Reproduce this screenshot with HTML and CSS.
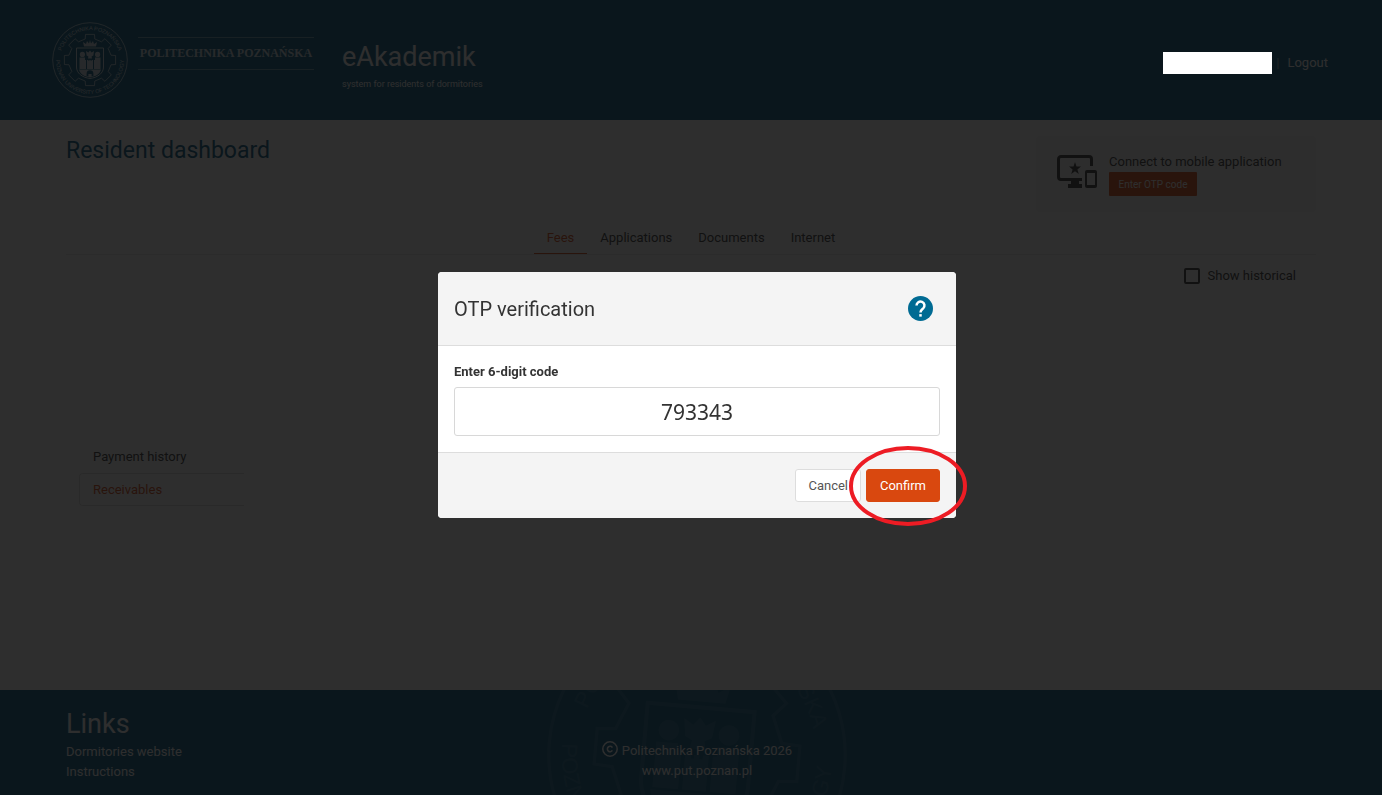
FILE: index.html
```
<!DOCTYPE html>
<html lang="en">
<head>
  <meta charset="UTF-8">
  <meta name="viewport" content="width=device-width, initial-scale=1.0">
  <title>eAkademik - OTP verification</title>
  <link rel="stylesheet" href="styles.css">
</head>
<body>
  <header class="header">
    <!-- the footer reuses this seal -->
    <svg class="header-seal" viewBox="-38 -38 76 76" aria-hidden="true">
      <defs>
        <path id="arcTop" d="M-29.6 5A30 30 0 1 1 29.6 5"/>
        <path id="arcBottom" d="M-32.5 -10A34 34 0 1 0 32.5 -10"/>
      </defs>
      <g id="seal">
        <circle r="37.3" fill="none" stroke="currentColor" stroke-width=".8"/>
        <path fill="none" stroke="currentColor" stroke-width=".8" d="M-4.8 -21L-4.5 -25.6H4.5L4.8 -21L11.5 -18.2L14.9 -21.3L21.3 -14.9L18.2 -11.5L21 -4.8L25.6 -4.5V4.5L21 4.8L18.2 11.5L21.3 14.9L14.9 21.3L11.5 18.2L4.8 21L4.5 25.6H-4.5L-4.8 21L-11.5 18.2L-14.9 21.3L-21.3 14.9L-18.2 11.5L-21 4.8L-25.6 4.5V-4.5L-21 -4.8L-18.2 -11.5L-21.3 -14.9L-14.9 -21.3L-11.5 -18.2Z"/>
        <path fill="none" stroke="currentColor" stroke-width="1" d="M-13.5 -12H13.5V7C13.5 13 8 17.5 0 18.5C-8 17.5 -13.5 13 -13.5 7Z"/>
        <path fill="currentColor" d="M-6 -13.5L-7 -18L-4 -16L-3 -19L-1 -16.5L0 -20L1 -16.5L3 -19L4 -16L7 -18L6 -13.5Z"/>
        <g fill="currentColor">
          <circle cx="-7.6" cy="-5.6" r="2.6"/>
          <circle cx="7.6" cy="-5.6" r="2.6"/>
          <path d="M-4 -9L-1.6 -7.5L0 -9.5L1.6 -7.5L4 -9L3.4 -4.5L1.6 -3.6L2 -1.5H-2L-1.6 -3.6L-3.4 -4.5Z"/>
          <path d="M-10.5 -2.5H-5V0H-4V9H-10.5ZM5 -2.5H10.5V9H4V0H5ZM-3 0H-1.5V1H-.7V0H.7V1H1.5V0H3V9H-3Z"/>
          <path fill-rule="evenodd" d="M-11 9.6H11C10 14 6 16.6 0 17.4C-6 16.6 -10 14 -11 9.6ZM-3.4 16V13.6A3.4 3.4 0 0 1 3.4 13.6V16L1.6 16.4V14H-1.6V16.4Z"/>
        </g>
        <text class="seal-text"><textPath href="#arcTop" startOffset="50%" text-anchor="middle">POLITECHNIKA POZNAŃSKA</textPath></text>
        <text class="seal-text"><textPath href="#arcBottom" startOffset="50%" text-anchor="middle">POZNAN UNIVERSITY OF TECHNOLOGY</textPath></text>
      </g>
    </svg>
    <div class="university">POLITECHNIKA POZNAŃSKA</div>
    <div class="brand">
      <div class="brand-name">eAkademik</div>
      <div class="brand-sub">system for residents of dormitories</div>
    </div>
    <div class="user">
      <span class="user-name"></span>
      <span class="user-sep">|</span>
      <a href="#">Logout</a>
    </div>
  </header>

  <main class="main">
    <div class="top">
      <h1>Resident dashboard</h1>
      <div class="mobile">
        <svg class="mobile-icon" viewBox="0 0 40 34" aria-hidden="true">
          <path fill="none" stroke="currentColor" stroke-width="3" d="M34.5 11V4A2.5 2.5 0 0 0 32 1.5H4A2.5 2.5 0 0 0 1.5 4V22A2.5 2.5 0 0 0 4 24.5H25"/>
          <path fill="currentColor" d="M14 25H22V29H25V33H11V29H14Z"/>
          <path fill="currentColor" d="M18 7L19.5 11.6H24L20.4 14.4L21.8 19L18 16.2L14.2 19L15.6 14.4L12 11.6H16.5Z"/>
          <path fill="currentColor" fill-rule="evenodd" d="M30 15H38A2 2 0 0 1 40 17V31A2 2 0 0 1 38 33H30A2 2 0 0 1 28 31V17A2 2 0 0 1 30 15ZM30 18V30H38V18Z"/>
        </svg>
        <div>
          <div class="mobile-title">Connect to mobile application</div>
          <button type="button" class="otp-btn">Enter OTP code</button>
        </div>
      </div>
    </div>

    <nav class="tabs">
      <a class="tab active" href="#">Fees</a>
      <a class="tab" href="#">Applications</a>
      <a class="tab" href="#">Documents</a>
      <a class="tab" href="#">Internet</a>
    </nav>

    <div class="filter">
      <input type="checkbox" id="historical">
      <label for="historical">Show historical</label>
    </div>

    <nav class="side">
      <a href="#">Payment history</a>
      <a class="current" href="#">Receivables</a>
    </nav>
  </main>

  <footer class="footer">
    <svg class="footer-seal" viewBox="-38 -38 76 76" aria-hidden="true"><use href="#seal"/></svg>
    <div class="links">
      <h2>Links</h2>
      <a href="#">Dormitories website</a>
      <a href="#">Instructions</a>
    </div>
    <div class="copy">
      <div class="copy-line">
        <svg class="copy-icon" viewBox="0 0 16 16" aria-hidden="true">
          <circle cx="8" cy="8" r="7.2" fill="none" stroke="currentColor" stroke-width="1.5"/>
          <path fill="none" stroke="currentColor" stroke-width="1.6" d="M10.4 6.6A2.7 2.7 0 1 0 10.4 9.4"/>
        </svg>
        <span>Politechnika Poznańska 2026</span>
      </div>
      <a href="#">www.put.poznan.pl</a>
    </div>
  </footer>

  <div class="backdrop">
    <form class="modal" role="dialog" aria-labelledby="otpTitle">
      <div class="modal-header">
        <h2 id="otpTitle">OTP verification</h2>
        <button type="button" class="help" aria-label="Help">
          <svg viewBox="0 0 24 24" aria-hidden="true">
            <circle cx="12" cy="12" r="12" fill="#006b93"/>
            <path fill="none" stroke="#fff" stroke-width="2.4" d="M8.2 9.2A3.8 3.8 0 1 1 14.6 11.9C13.2 13.1 12 13.6 12 15.8"/>
            <path fill="#fff" d="M10.8 17.4H13.2V19.8H10.8Z"/>
          </svg>
        </button>
      </div>
      <div class="modal-body">
        <label for="code">Enter 6-digit code</label>
        <input type="text" id="code" value="793343" maxlength="6" inputmode="numeric">
      </div>
      <div class="modal-footer">
        <button type="button" class="btn">Cancel</button>
        <div class="confirm-wrap">
          <button type="submit" class="btn btn-primary">Confirm</button>
          <svg class="marker" viewBox="0 0 120 82" aria-hidden="true">
            <ellipse cx="60" cy="41" rx="57" ry="38" fill="none" stroke="#ed1c24" stroke-width="4"/>
          </svg>
        </div>
      </div>
    </form>
  </div>
</body>
</html>
```
FILE: styles.css
```
* { box-sizing: border-box; }
html, body { height: 100%; }
body {
  margin: 0; display: flex; flex-direction: column; background: #fff; color: #333;
  font-family: Roboto, "Noto Sans", sans-serif; font-size: 13px; line-height: 20px;
}
a { color: inherit; text-decoration: none; }
h1, h2 { margin: 0; font-weight: 400; }
button { font-family: inherit; cursor: pointer; }
.seal-text { font-family: "Liberation Sans", sans-serif; font-size: 5.5px; fill: currentColor; }

/* header */
.header {
  display: flex; height: 120px; flex-shrink: 0; padding: 0 52px;
  background: #005680; color: #fff;
}
.header-seal { width: 76px; height: 76px; margin: 22px 10px 0 0; opacity: .8; }
.university {
  height: 33px; min-width: 176px; margin-top: 37px; border: solid rgba(255,255,255,.5); border-width: 1px 0;
  font-family: "Liberation Serif", serif; font-size: 12px; line-height: 31px; font-weight: bold;
  text-align: center; opacity: .8;
}
.brand { margin: 42px 0 0 28px; }
.brand-name { font-size: 27px; line-height: 30px; }
.brand-sub { font-size: 9px; line-height: 12px; margin-top: 6px; }
.user { display: flex; align-items: center; height: 24px; margin: 51px 2px 0 auto; gap: 4px; }
.user-name { position: relative; z-index: 20; width: 109px; height: 22px; background: #fff; }
.user-sep { opacity: .5; }
.user a { margin-left: 4px; }

/* dashboard */
.main { flex: 1 0 auto; padding: 16px 66px 0; }
.top { display: flex; justify-content: space-between; align-items: flex-start; }
.top h1 { font-size: 23px; line-height: 30px; color: #005680; }
.mobile {
  display: flex; gap: 12px; width: 280px; height: 76px; padding: 16px 21px;
  background: #f8f8f8; border-radius: 4px;
}
.mobile-icon { width: 40px; height: 34px; margin-top: 3px; flex-shrink: 0; }
.mobile-title { line-height: 20px; white-space: nowrap; }
.otp-btn {
  display: block; width: 88px; height: 24px; padding: 0; border: 0; border-radius: 1px;
  background: #d9480f; color: #fff; font-size: 10px;
}
.tabs { display: flex; justify-content: center; margin-top: 10px; border-bottom: 1px solid #e5e5e5; }
.tab { padding: 6px 13px 5px; border-bottom: 1px solid transparent; }
.tab.active { color: #d9480f; border-color: #d9480f; }
.filter { display: flex; justify-content: flex-end; align-items: center; gap: 8px; padding: 11px 20px 0 0; }
.filter input {
  appearance: none; width: 16px; height: 16px; margin: 0; border: 2px solid #333; border-radius: 2px;
}
.side { display: flex; flex-direction: column; width: 165px; margin: 154px 0 0 13px; }
.side a { padding: 6px 13px 5px; border: 1px solid transparent; border-right: 0; }
.side .current { color: #d9480f; border-color: #ddd; border-radius: 4px 0 0 4px; }

/* footer */
.footer {
  position: relative; display: grid; grid-template-columns: 1fr 1fr 1fr; flex-shrink: 0;
  height: 105px; padding: 18px 54px 0 66px; background: #005680; color: #fff; overflow: hidden;
}
.footer-seal {
  position: absolute; left: calc(50% + 6px); top: -86px; width: 302px; height: 302px;
  transform: translateX(-50%) rotate(5deg); opacity: .1;
}
.links { display: flex; flex-direction: column; align-items: flex-start; }
.links h2 { font-size: 27px; line-height: 32px; margin-bottom: 2px; }
.copy { text-align: center; padding-top: 33px; }
.copy-line { display: flex; justify-content: center; gap: 4px; }
.copy-icon { width: 16px; height: 16px; }

/* modal */
.backdrop {
  position: fixed; inset: 0; z-index: 10; display: flex; align-items: center; justify-content: center;
  padding: 0 0 5px 12px; background: rgba(12,12,12,.86);
}
.modal { width: 518px; max-width: 90%; background: #fff; border-radius: 4px; }
.modal-header {
  display: flex; justify-content: space-between; align-items: center; height: 74px; padding: 0 23px 0 16px;
  background: #f4f4f4; border-bottom: 1px solid #ddd; border-radius: 4px 4px 0 0;
}
.modal-header h2 { font-size: 20px; line-height: 28px; }
.help { width: 25px; height: 25px; padding: 0; border: 0; background: none; }
.help svg { display: block; }
.modal-body { padding: 16px; }
.modal-body label { display: block; margin-bottom: 5px; font-weight: bold; }
.modal-body input {
  display: block; width: 100%; height: 49px; padding: 0 12px; border: 1px solid #d8d8d8; border-radius: 3px;
  background: #fff; color: #333; text-align: center; font-family: "Noto Sans", sans-serif; font-size: 21px;
}
.modal-footer {
  display: flex; justify-content: flex-end; gap: 5px; padding: 16px;
  background: #f4f4f4; border-top: 1px solid #ddd; border-radius: 0 0 4px 4px;
}
.btn {
  height: 33px; padding: 0 12px; border: 1px solid #ddd; border-radius: 3px;
  background: #fff; color: #555; font-size: 13px;
}
.btn-primary { width: 74px; border-color: #d9480f; background: #d9480f; color: #fff; }
.confirm-wrap { position: relative; }
.marker { position: absolute; left: -18px; top: -24px; width: 120px; height: 82px; pointer-events: none; }
```
